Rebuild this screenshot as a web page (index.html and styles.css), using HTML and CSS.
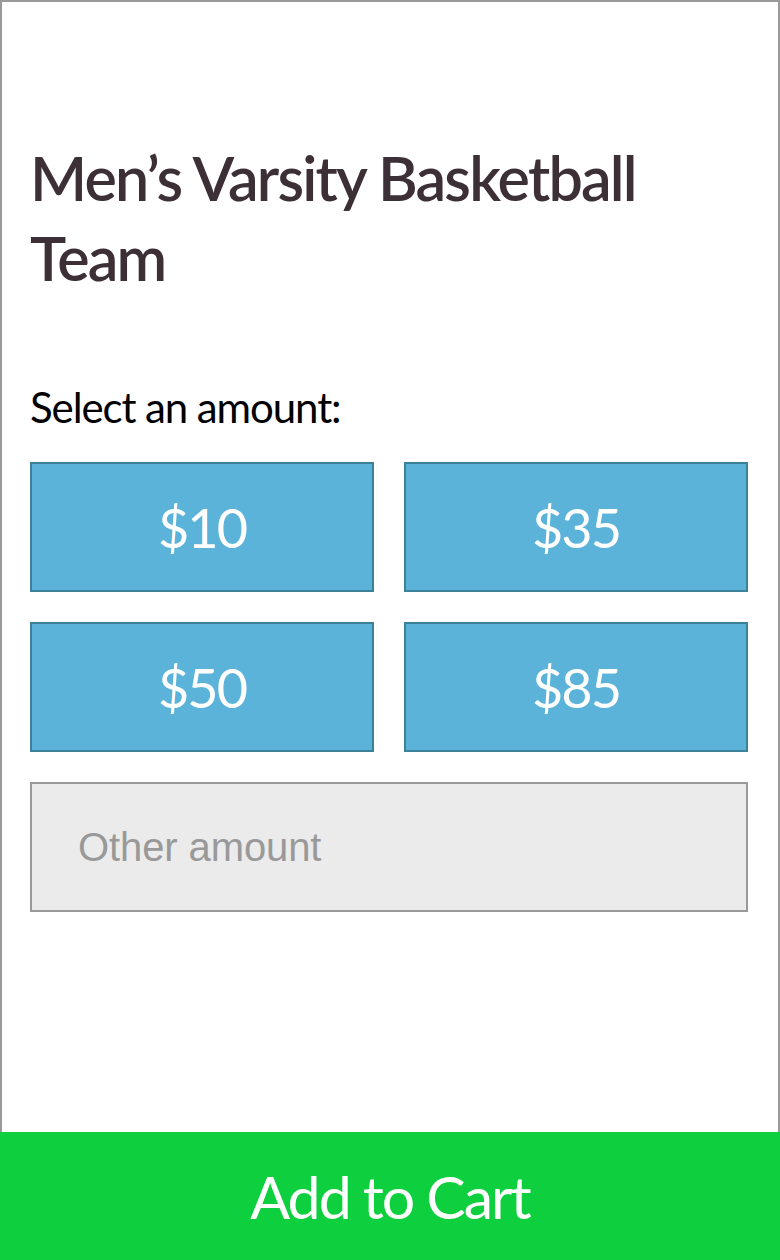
FILE: index.html
```html
<!DOCTYPE html>
<html>
<head>
<meta charset="utf-8">
<link rel="stylesheet" href="styles.css">
</head>
<body>
<div class="page">
  <main class="content">
    <h1 class="title">Men’s Varsity Basketball Team</h1>
    <p class="label">Select an amount:</p>
    <div class="amounts">
      <button class="amount">$10</button>
      <button class="amount">$35</button>
      <button class="amount">$50</button>
      <button class="amount">$85</button>
    </div>
    <input class="other" type="text" placeholder="Other amount">
  </main>
  <button class="cart">Add to Cart</button>
</div>
</body>
</html>
```

FILE: styles.css
```css
* { box-sizing: border-box; }
html, body { margin: 0; padding: 0; }
body { background: #fff; }

.page {
  width: 780px;
  height: 1260px;
  display: flex;
  flex-direction: column;
}

.content {
  flex: 1;
  border: 2px solid #999;
  border-bottom: none;
  padding: 136px 30px 0 28px;
  display: flex;
  flex-direction: column;
}

.title {
  margin: 0;
  font-family: Lato, sans-serif;
  font-weight: 600;
  font-size: 61px;
  line-height: 80px;
  color: #3c3036;
  letter-spacing: -1.8px;
}

.label {
  margin: 84px 0 0;
  font-family: Lato, sans-serif;
  font-weight: 400;
  font-size: 42px;
  line-height: 50px;
  color: #000;
  letter-spacing: -1.1px;
}

.amounts {
  margin-top: 30px;
  display: grid;
  grid-template-columns: 1fr 1fr;
  gap: 30px;
}

.amount {
  height: 130px;
  background: #5bb3d9;
  border: 2px solid #3d8199;
  color: #fff;
  font-family: Lato, sans-serif;
  font-size: 54px;
  font-weight: 400;
  letter-spacing: -2px;
  padding: 0;
}

.other {
  margin-top: 30px;
  height: 130px;
  width: 100%;
  background: #ebebeb;
  border: 2px solid #999;
  padding: 0 46px;
  font-family: "Liberation Sans", Arial, sans-serif;
  font-size: 40px;
  color: #333;
  letter-spacing: -0.1px;
}
.other::placeholder { color: #999; }

.cart {
  height: 128px;
  width: 780px;
  border: none;
  background: #0ecf3e;
  color: #fff;
  font-family: Lato, sans-serif;
  font-size: 59px;
  font-weight: 400;
  letter-spacing: -2px;
  padding: 0;
}
```
